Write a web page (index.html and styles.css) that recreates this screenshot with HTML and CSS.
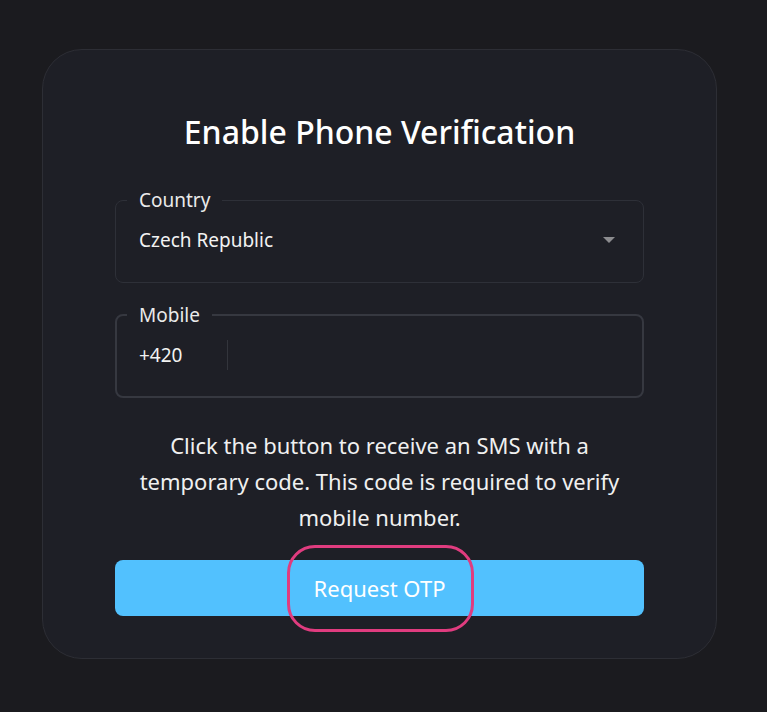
FILE: index.html
```html
<!DOCTYPE html>
<html lang="en">
<head>
    <meta charset="UTF-8">
    <meta name="viewport" content="width=device-width, initial-scale=1.0">
    <title>Enable Phone Verification</title>
    <link rel="stylesheet" href="styles.css">
</head>
<body>
    <div class="verify-card">
        <h1 class="verify-title">Enable Phone Verification</h1>

        <fieldset class="field">
            <legend class="field-label">Country</legend>
            <div class="select-row">
                <span class="field-value">Czech Republic</span>
                <span class="select-arrow"></span>
            </div>
        </fieldset>

        <fieldset class="field field-active">
            <legend class="field-label">Mobile</legend>
            <div class="phone-row">
                <span class="field-value phone-prefix">+420</span>
                <span class="phone-divider"></span>
                <input class="phone-input" type="tel">
            </div>
        </fieldset>

        <p class="verify-text">Click the button to receive an SMS with a temporary code. This code is required to verify mobile number.</p>

        <div class="button-wrap">
            <button class="otp-button">Request OTP</button>
            <div class="highlight-ring"></div>
        </div>
    </div>
</body>
</html>
```

FILE: styles.css
```css
* {
    margin: 0;
    padding: 0;
    box-sizing: border-box;
}

body {
    font-family: 'Noto Sans', 'DejaVu Sans', sans-serif;
    color: #fff;
    background-color: #1b1b1f;
    padding-top: 49px;
    height: 100vh;
    overflow: hidden;
}

.verify-card {
    width: 675px;
    margin-left: 42px;
    padding: 64px 72px 42px;
    background: #1e1f26;
    border: 1px solid #2d2e35;
    border-radius: 40px;
}

.verify-title {
    font-size: 32px;
    font-weight: 500;
    line-height: 36px;
    text-align: center;
    margin-bottom: 39px;
}

.field {
    border: 1px solid #2e3038;
    border-radius: 8px;
    padding: 17px 23px 30px;
    min-width: 0;
}

.field-active {
    border: 2px solid #363840;
    margin-top: 21px;
    padding: 14px 22px 26px;
}

.field-label {
    font-size: 19px;
    line-height: 22px;
    color: #eaeaea;
    margin-left: -12px;
    padding: 0 12px;
}

.select-row {
    display: flex;
    align-items: center;
    justify-content: space-between;
    height: 24px;
}

.field-value {
    font-size: 19px;
    line-height: 24px;
    color: #f2f2f2;
}

.select-arrow {
    width: 0;
    height: 0;
    border-left: 6px solid transparent;
    border-right: 6px solid transparent;
    border-top: 6px solid #8c8c8f;
    margin-right: 5px;
}

.phone-row {
    display: flex;
    align-items: center;
    height: 30px;
}

.phone-prefix {
    width: 88px;
}

.phone-divider {
    width: 1px;
    height: 30px;
    background: #33353c;
}

.phone-input {
    flex: 1;
    background: transparent;
    border: none;
    outline: none;
}

.verify-text {
    font-size: 22px;
    line-height: 36px;
    text-align: center;
    color: #f0f0f0;
    margin: 29px 10px 25px;
}

.button-wrap {
    position: relative;
}

.otp-button {
    display: block;
    width: 100%;
    height: 56px;
    border: none;
    border-radius: 8px;
    background: #52c1fe;
    color: #fff;
    font-family: inherit;
    font-size: 22px;
}

.highlight-ring {
    position: absolute;
    left: 172px;
    top: -15px;
    width: 187px;
    height: 87px;
    border: 3px solid #e03c7f;
    border-radius: 28px;
    pointer-events: none;
}
```
